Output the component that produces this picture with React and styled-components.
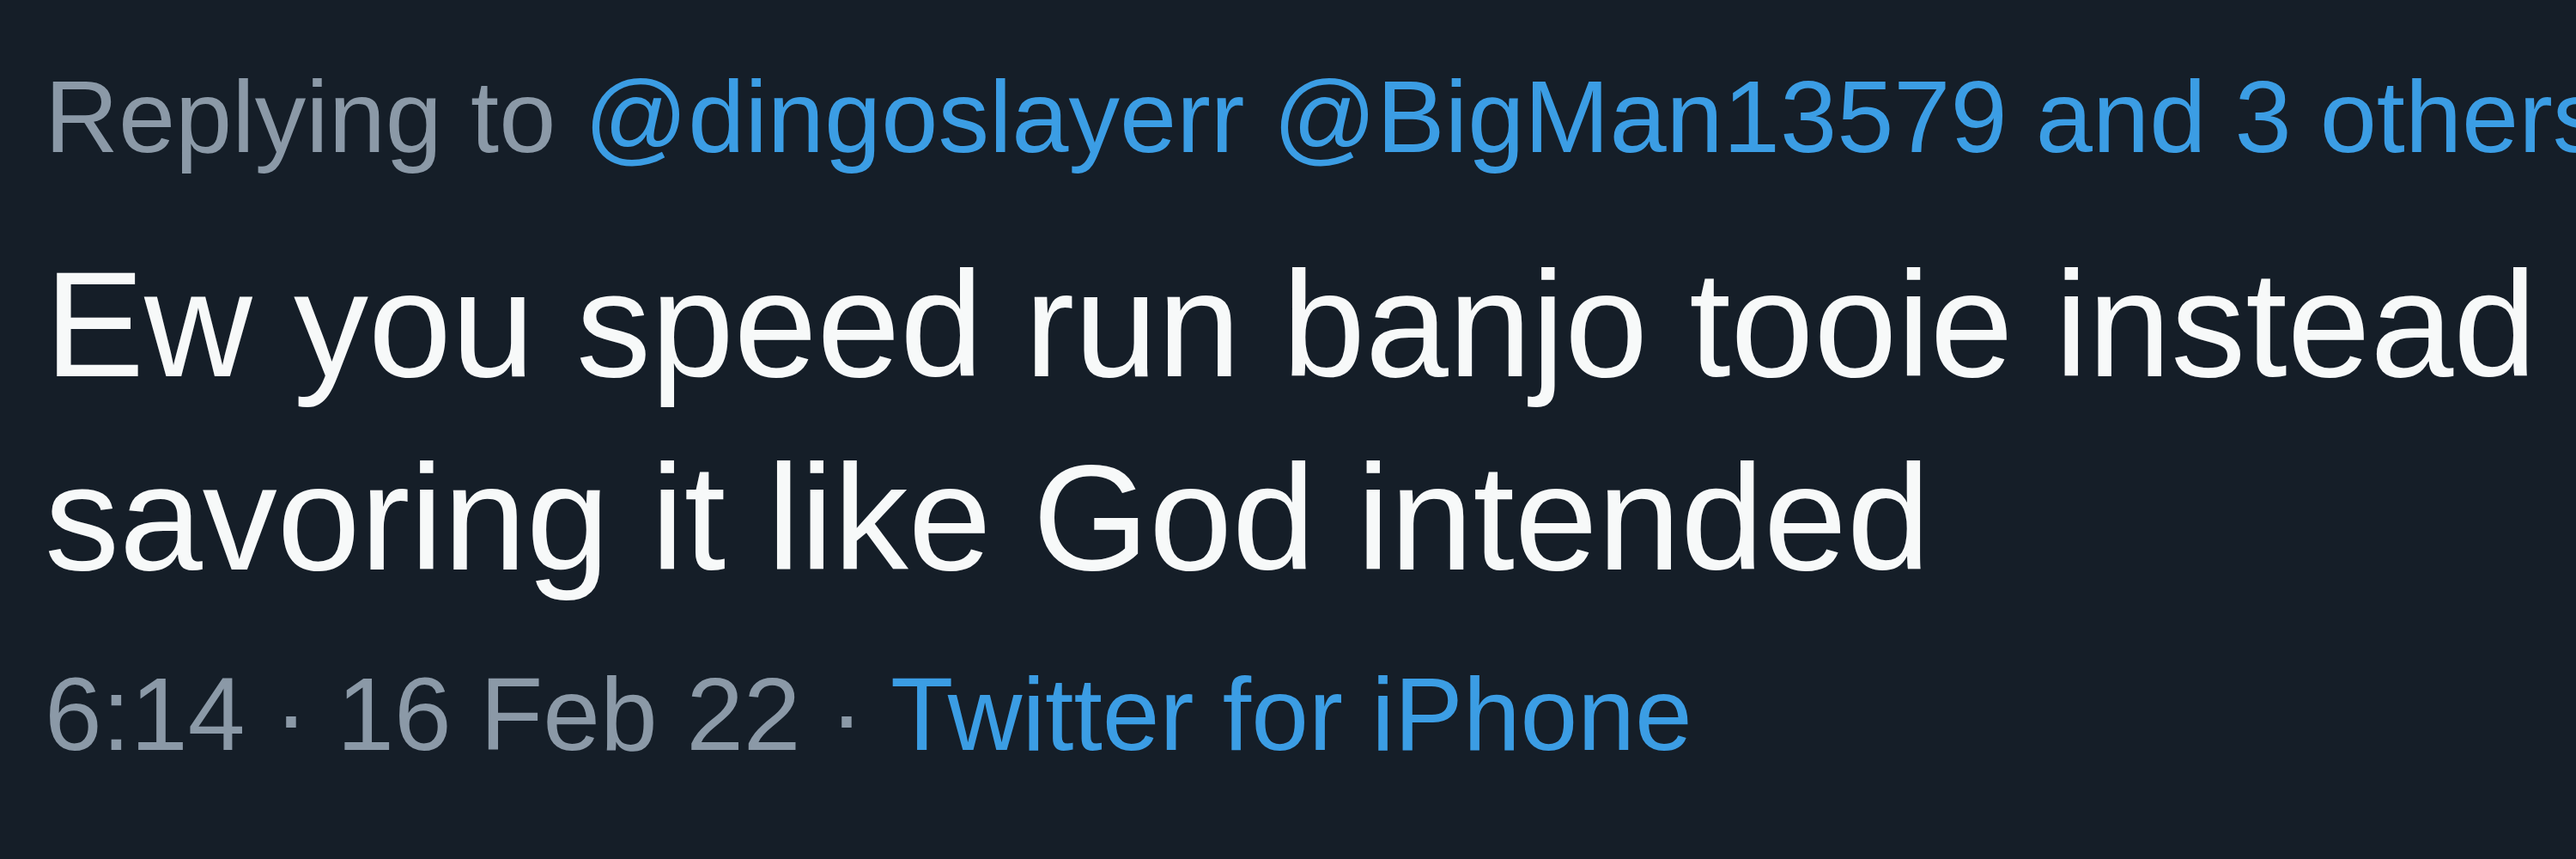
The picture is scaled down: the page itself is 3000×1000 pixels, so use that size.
import React from "react";
import styled, { createGlobalStyle } from "styled-components";

const GlobalStyle = createGlobalStyle`
  html, body {
    margin: 0;
    padding: 0;
    background: #151e28;
    overflow: hidden;
  }
  body {
    font-family: "Liberation Sans", Arial, sans-serif;
  }
`;

const Page = styled.main`
  width: 3000px;
  height: 1000px;
  box-sizing: border-box;
  padding: 56px 0 0 52px;
  background: #151e28;
  overflow: hidden;
  display: flex;
  flex-direction: column;
`;

const ReplyLine = styled.div`
  font-size: 119px;
  line-height: 160px;
  color: #8b99a7;
  white-space: nowrap;
`;

const Mention = styled.span`
  color: #3b9de4;
`;

const Body = styled.p`
  margin: 49px 0 0 0;
  font-size: 174px;
  line-height: 225px;
  color: #f7f9f9;
  width: 2948px;
`;

const Meta = styled.div`
  margin-top: 36px;
  font-size: 120px;
  line-height: 160px;
  color: #8b99a7;
  white-space: nowrap;
`;

const Source = styled.span`
  color: #3b9de4;
`;

export default function App() {
  return (
    <>
      <GlobalStyle />
      <Page>
        <ReplyLine>
          Replying to <Mention>@dingoslayerr</Mention>{" "}
          <Mention>@BigMan13579</Mention> <Mention>and 3 others</Mention>
        </ReplyLine>
        <Body>Ew you speed run banjo tooie instead savoring it like God intended</Body>
        <Meta>
          6:14 · 16 Feb 22 · <Source>Twitter for iPhone</Source>
        </Meta>
      </Page>
    </>
  );
}
